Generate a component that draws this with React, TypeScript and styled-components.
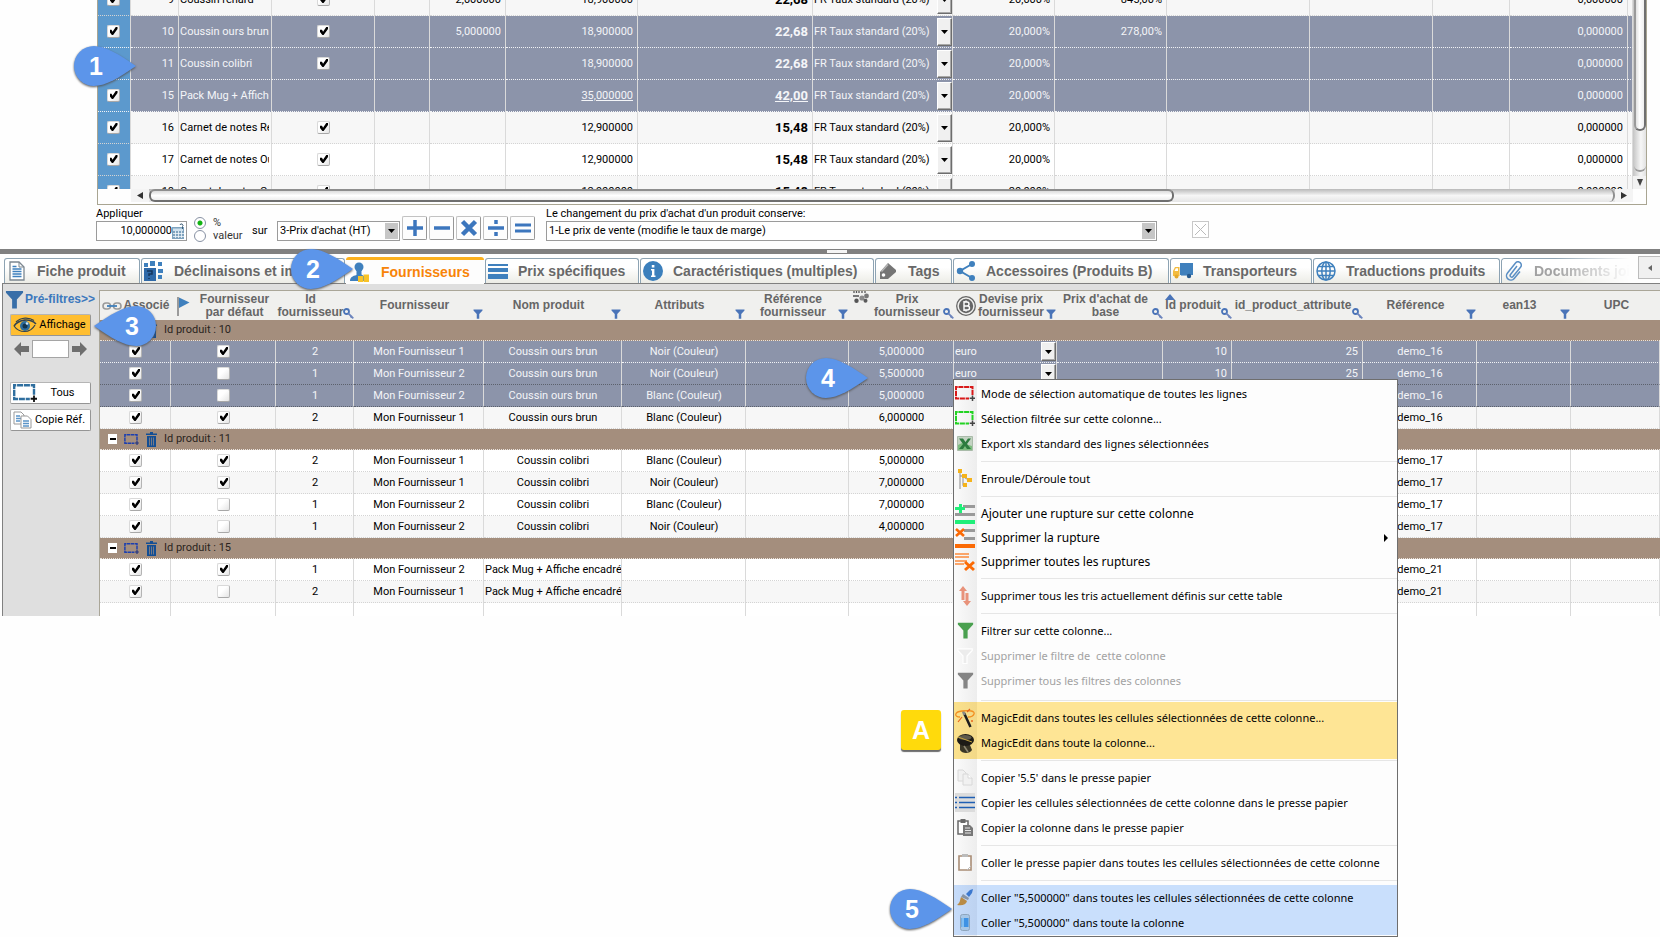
import React from 'react';
import styled, { createGlobalStyle, css } from 'styled-components';

const ui = '"Roboto", "Liberation Sans", sans-serif';
const heading = '"Liberation Sans", Arial, sans-serif';
const menuFont = '"Noto Sans", "Open Sans", sans-serif';
const blue = '#3f80bd';

const Global = createGlobalStyle`
  * { box-sizing: border-box; }
  body { margin: 0; background: #fefefe; font: 11px/14px ${ui}; color: #000; }
  button, input, select { font: inherit; color: inherit; margin: 0; padding: 0; border-radius: 0; }
  svg { display: block; flex: none; }
`;

const Page = styled.main`
  position: relative;
  overflow-x: clip;
  min-height: 100vh;
`;

/* ---------- product grid ---------- */

const ProductPanel = styled.section`
  margin: 0 13px 0 97px;
  border: solid #a9a592;
  border-width: 0 1px 1px;
`;
const ProductArea = styled.div`
  display: flex;
  height: 189px;
`;
const Viewport = styled.div`
  flex: 1;
  min-width: 0;
  overflow: hidden;
`;
const Table = styled.table<{ $scrolled?: boolean }>`
  width: 100%;
  table-layout: fixed;
  border-spacing: 0;
  margin-top: ${p => (p.$scrolled ? '-16px' : '0')};
`;
type Tone = 'selected' | 'odd' | 'even';
const tones = { selected: '#8c94aa', odd: '#f7f7f7', even: '#ffffff' };
const Row = styled.tr<{ $tone: Tone; $h: number; $focus?: boolean }>`
  background: ${p => tones[p.$tone]};
  color: ${p => (p.$tone === 'selected' ? '#f4f5f8' : '#000')};
  > td {
    height: ${p => p.$h}px;
    border-bottom: 1px dotted ${p => (p.$focus ? '#5c616c' : p.$tone === 'selected' ? '#f2f3f6' : '#d4d4d4')};
  }
`;
const pads: Record<string, string> = { left: '0 2px 0 1px', center: '0 0 0 1px', right: '0 4px 0 1px' };
const Cell = styled.td<{ $align?: string; $strong?: boolean; $under?: boolean; $marker?: boolean }>`
  padding: ${p => pads[p.$align || 'right']};
  border-right: 1px solid #dadada;
  text-align: ${p => p.$align || 'right'};
  ${p => p.$strong && css`font-size: 13px; font-weight: 700;`}
  ${p => p.$under && css`text-decoration: underline;`}
  ${p => p.$marker && css`background: #5c99cd; padding-right: 3px;`}
`;
const Clip = styled.span`
  display: block;
  overflow: hidden;
  white-space: nowrap;
`;
const Check = styled.input.attrs({ type: 'checkbox' })`
  appearance: none;
  display: block;
  margin: 0 auto;
  width: 13px;
  height: 13px;
  border: 1px solid #d9d9d9;
  border-right-color: #b4b4b4;
  border-bottom-color: #a8a8a8;
  border-radius: 2px;
  background: linear-gradient(135deg, #fff 40%, #e4e4e4);
  &:checked::after {
    content: '';
    display: block;
    width: 8px;
    height: 8px;
    margin: 1px 2px;
    background: #000;
    clip-path: polygon(0 35%, 25% 35%, 38% 58%, 78% 0, 100% 0, 100% 25%, 45% 100%, 30% 100%, 0 62%);
  }
`;
const Combo = styled.label<{ $h: number }>`
  display: flex;
  align-items: center;
  height: ${p => p.$h}px;
  margin-right: -2px;
`;
const PlainSelect = styled.select`
  appearance: none;
  flex: 1;
  min-width: 0;
  border: 0;
  background: transparent;
  outline: 0;
  option { color: #000; }
`;
const ComboArrow = styled.span`
  display: grid;
  place-items: center;
  width: 15px;
  height: 100%;
  background: #f0f0f0;
  border: 1px solid #fff;
  border-right: 1px solid #6d6d6d;
  border-bottom: 1px solid #6d6d6d;
  box-shadow: inset -1px -1px #a8a8a8;
`;

const Down = () => (
  <svg width={7} height={4} viewBox="0 0 7 4"><path d="M0 0h7L3.500 4z" /></svg>
);

const VBar = styled.div`
  width: 13px;
  display: flex;
  flex-direction: column;
  align-items: center;
  background: linear-gradient(90deg, #c4c4c4, #f6f6f6 60%, #e2e2e2);
`;
const VThumb = styled.div`
  width: 12px;
  height: 131px;
  border: 2px solid #6f6f6f;
  border-left-color: #9a9a9a;
  border-top: 0;
  border-radius: 0 0 6px 6px;
  background: linear-gradient(90deg, #e2e2e2, #fff 45%, #eee);
`;
const VEnd = styled.div`
  flex: 1;
  width: 12px;
  margin-bottom: 4px;
  border-bottom: 2px solid #9c9c9c;
  border-radius: 0 0 6px 6px;
`;
const VArrow = styled.button`
  width: 13px;
  height: 13px;
  display: grid;
  place-items: center;
  border: 0;
  background: #f2f2f2;
`;
const HBarRow = styled.div`
  display: flex;
  height: 15px;
  padding: 0 13px 2px 33px;
`;
const HBar = styled.div`
  flex: 1;
  display: flex;
  align-items: stretch;
  background: linear-gradient(#b9b9b9, #f6f6f6 50%, #e6e6e6);
`;
const HArrow = styled.button`
  width: 18px;
  display: grid;
  place-items: center;
  border: 0;
  background: #f4f4f4;
`;
const HTrack = styled.div`
  flex: 1;
  border-right: 2px solid #8f8f8f;
  border-radius: 6px;
`;
const HThumb = styled.div`
  width: 70%;
  height: 13px;
  border: 2px solid #6f6f6f;
  border-top-color: #8e8e8e;
  border-radius: 6px;
  background: linear-gradient(#dcdcdc, #fff 50%, #eee);
`;

/* ---------- price tool row ---------- */

const Tools = styled.section`
  display: flex;
  align-items: flex-start;
  height: 44px;
  padding: 2px 0 0 96px;
`;
const Field = styled.label<{ $w: number; $mr: number }>`
  display: flex;
  flex-direction: column;
  width: ${p => p.$w}px;
  margin-right: ${p => p.$mr}px;
`;
const FieldBox = styled.span`
  display: flex;
  align-items: center;
  height: 20px;
  padding: 1px;
  border: 1px solid #9b9b9b;
  background: #fff;
`;
const NumberInput = styled.input`
  flex: 1;
  min-width: 0;
  border: 0;
  outline: 0;
  text-align: right;
`;
const ListBox = styled(FieldBox)`
  padding-left: 2px;
`;
const ListArrow = styled.span`
  display: grid;
  place-items: center;
  width: 13px;
  height: 16px;
  background: #c6c6c6;
`;
const RadioGroup = styled.div`
  display: flex;
  flex-direction: column;
  padding-top: 9px;
  width: 58px;
`;
const RadioLabel = styled.label`
  display: flex;
  align-items: center;
  gap: 7px;
  height: 13px;
  color: #333;
`;
const Radio = styled.input.attrs({ type: 'radio' })`
  appearance: none;
  width: 12px;
  height: 12px;
  border: 1px solid #8791a3;
  border-radius: 50%;
  background: #fff;
  &:checked { background: radial-gradient(circle, #12b312 2px, #fff 3px); }
`;
const Inline = styled.span`
  padding-top: 17px;
  width: 25px;
`;
const SelectHolder = styled.div`
  padding-top: 14px;
  width: 123px;
  margin-right: 2px;
`;
const OpButton = styled.button`
  display: grid;
  place-items: center;
  width: 25px;
  height: 24px;
  margin: 9px 2px 0 0;
  background: #fdfdfd;
  border: 1px solid #c2c2c2;
  border-right-color: #979797;
  border-bottom-color: #979797;
  border-radius: 2px;
`;
const WideField = styled(Field)`margin-left: 9px;`;
const CloseBox = styled.button`
  width: 17px;
  height: 17px;
  margin-top: 14px;
  display: grid;
  place-items: center;
  background: #fff;
  border: 1px solid #c8c8c8;
`;
const Splitter = styled.div`
  height: 5px;
  display: flex;
  justify-content: center;
  padding: 1px 0 1px 14px;
  background: #808080;
`;
const Grip = styled.span`
  width: 20px;
  background: #f4f4f4;
`;

/* ---------- tabs ---------- */

const TabStrip = styled.nav`
  display: flex;
  align-items: flex-end;
  gap: 1px;
  height: 29px;
  padding: 2px 0 0 4px;
`;
const Tab = styled.button<{ $w?: number; $active?: boolean; $fade?: boolean }>`
  flex: ${p => (p.$w ? `0 0 ${p.$w}px` : '1 1 0')};
  min-width: 0;
  overflow: hidden;
  display: flex;
  align-items: center;
  gap: 10px;
  height: 25px;
  padding: 0 0 0 2px;
  border: 1px solid #8da3b3;
  border-bottom: 0;
  border-radius: 3px 3px 0 0;
  background: linear-gradient(#fff 35%, #ecece6);
  color: #686868;
  font: 700 14px/18px ${heading};
  white-space: nowrap;
  ${p => p.$active && css`
    gap: 12px;
    height: 27px;
    padding-left: 3px;
    margin-bottom: -1px;
    border: 0;
    border-top: 3px solid #fbb01e;
    background: #fdfdfd;
    color: #f88408;
    position: relative;
  `}
  ${p => p.$fade && css`
    border-right: 0;
    color: #a2a2a2;
    mask-image: linear-gradient(90deg, #000 40%, transparent 95%);
  `}
`;
const IconSlot = styled.span<{ $top?: boolean }>`
  display: grid;
  place-items: ${p => (p.$top ? 'start' : 'center')} center;
  width: 20px;
  height: ${p => (p.$top ? '100%' : '20px')};
  flex: none;
`;
const TabScroll = styled.button`
  flex: none;
  display: grid;
  place-items: center;
  width: 22px;
  height: 23px;
  align-self: flex-start;
  border: 1px solid #bcbcbc;
  border-right: 0;
  background: #f0f0f0;
`;

/* ---------- supplier panel ---------- */

const SupplierPanel = styled.section`
  display: flex;
  margin-left: 2px;
  border: solid #808080;
  border-width: 1px 0 0 1px;
  background: #dfdfdf;
`;
const SideBar = styled.aside`
  flex: none;
  width: 96px;
  padding: 5px 8px 0 7px;
  display: flex;
  flex-direction: column;
`;
const PreFilter = styled.a`
  display: flex;
  align-items: center;
  gap: 1px;
  height: 20px;
  margin: 0 -8px 5px -5px;
  color: #3c78bd;
  font: 700 12px/14px ${heading};
  text-decoration: none;
`;
const SideButton = styled.button<{ $hot?: boolean }>`
  display: flex;
  align-items: center;
  height: 22px;
  padding: 0 2px;
  margin-bottom: 5px;
  border: 1px solid #b5b5b5;
  border-right-color: #959595;
  border-bottom-color: #959595;
  border-radius: 2px;
  background: ${p => (p.$hot ? '#ffbe31' : '#fff')};
  > span { flex: 1; text-align: center; white-space: nowrap; }
`;
const Stepper = styled.div`
  display: flex;
  align-items: center;
  justify-content: center;
  gap: 3px;
  height: 18px;
  margin: -1px 0 24px;
`;
const StepInput = styled.input`
  width: 37px;
  height: 18px;
  border: 1px solid #a5a5a5;
  background: #fff;
`;
const SupplierGrid = styled.div`
  flex: 1;
  min-width: 0;
  overflow: hidden;
  margin-top: 6px;
  border: solid #aaa698;
  border-width: 1px 0 0 1px;
  background: #fff;
`;
const HeadCell = styled.th`
  height: 29px;
  padding: 0;
  background: #f0f0ee;
  color: #666;
  font: 700 12px/13px ${heading};
`;
const HeadInner = styled.div`
  position: relative;
  display: flex;
  align-items: center;
  height: 29px;
  padding: 0 0 0 2px;
`;
const HeadLabel = styled.span`
  flex: 1;
  min-width: 0;
  display: flex;
  justify-content: center;
  text-align: center;
  white-space: pre;
`;
const HeadAction = styled.span`
  align-self: flex-end;
  width: 11px;
  padding-bottom: 1px;
`;
const SortMark = styled.span`
  position: absolute;
  top: 3px;
  left: 2px;
`;
const GroupCell = styled.td`
  height: 21px;
  padding: 0 8px;
  background: #a48e7d;
  border-bottom: 1px dotted #e9e2dc;
  color: #2a2420;
`;
const GroupInner = styled.div`
  display: flex;
  align-items: center;
  gap: 7px;
`;
const Toggle = styled.button`
  display: grid;
  place-items: center;
  width: 9px;
  height: 10px;
  border: 0;
  background: #fff;
`;
const Filler = styled.td`
  height: 13px;
  padding: 0;
  border-right: 1px solid #dadada;
`;

/* ---------- context menu ---------- */

const Menu = styled.div`
  position: absolute;
  left: 953px;
  top: 379px;
  width: 445px;
  padding: 1px 0;
  border: 1px solid #6e6e6e;
  background: linear-gradient(90deg, #fbfbfb, #ededed) 0 0 / 23px 100% no-repeat #fdfdfd;
  font: 11px/16px ${menuFont};
`;
const MenuGroup = styled.div<{ $hl?: 'yellow' | 'blue' }>`
  ${p => p.$hl === 'yellow' && css`
    padding: 3px 0 4px;
    background: linear-gradient(90deg, #fbe18b, #f2d888) 0 0 / 23px 100% no-repeat #fee595;
  `}
  ${p => p.$hl === 'blue' && css`
    background: linear-gradient(90deg, #c6dcfa, #bdd2f0) 0 0 / 23px 100% no-repeat #c9dffc;
  `}
`;
const Item = styled.button<{ $loose?: boolean }>`
  display: flex;
  align-items: center;
  width: 100%;
  height: ${p => (p.$loose ? 24 : 25)}px;
  padding: 0 9px 0 1px;
  gap: 6px;
  border: 0;
  background: transparent;
  text-align: left;
  font-size: ${p => (p.$loose ? 12 : 11)}px;
  white-space: pre;
  &:disabled { color: #a2a2a2; }
  > span:nth-child(2) { flex: 1; }
`;
const Rule = styled.hr<{ $h?: number; $top?: number }>`
  height: 1px;
  margin: ${p => p.$top ?? 5}px 0 ${p => (p.$h ?? 10) - 1 - (p.$top ?? 5)}px 27px;
  border: 0;
  background: #e6e6e6;
`;

/* ---------- annotations ---------- */

const Callout = styled.span<{ $x: number; $y: number; $flip?: boolean }>`
  position: absolute;
  left: ${p => p.$x}px;
  top: ${p => p.$y}px;
  width: 62px;
  height: 40px;
  padding: ${p => (p.$flip ? '0 0 0 14px' : '0 18px 0 0')};
  color: #fff;
  font: 700 25px/41px ${heading};
  text-align: center;
  > svg { position: absolute; inset: 0; overflow: visible; filter: drop-shadow(0 1px 1px #555); }
  > b { position: relative; }
`;
const Badge = styled.span`
  position: absolute;
  left: 901px;
  top: 710px;
  width: 40px;
  height: 40px;
  border-radius: 3px;
  background: #ffda0c;
  box-shadow: 0 2px 1px #6b6b6b;
  color: #fff;
  font: 700 25px/41px ${heading};
  text-align: center;
`;

/* ---------- icons ---------- */

const Funnel = ({ s = 10, c = '#4a74b8', stroke = 'none' }: { s?: number; c?: string; stroke?: string }) => (
  <svg width={s} height={s} viewBox="0 0 20 20"><path d="M1 1h18v2l-6.500 7v9.500h-5V10L1 3z" fill={c} stroke={stroke} strokeWidth={1.500} /></svg>
);
const KeyIcon = () => (
  <svg width={11} height={11} viewBox="0 0 11 11"><circle cx={3.500} cy={3.500} r={2.500} fill="none" stroke="#4a74b8" strokeWidth={1.800} /><path d="M5.300 5.300l5 5M7.500 9.500l1.700-1.700" stroke="#6d85bd" strokeWidth={1.800} /></svg>
);
const DocIcon = () => (
  <svg width={16} height={20} viewBox="0 0 16 20"><path d="M1 1h9l5 5v13H1z" fill="#fff" stroke="#7c8790" strokeWidth={1.300} /><path d="M10 1v5h5" fill="none" stroke="#7c8790" /><path d="M3.500 8h9M3.500 10.500h9M3.500 13h9M3.500 15.500h9M3.500 5.500h4" stroke={blue} strokeWidth={1.400} /></svg>
);
const BoxesIcon = () => (
  <svg width={20} height={20} viewBox="0 0 20 20"><path d="M0 7h12v13H0z" fill="#2f69a8" /><path d="M0 2h4v4H0zM6 0h5v5H6zM14 1h4v4h-4zM14 8h5v4h-5zM14 14h4v4h-4z" fill={blue} /><path d="M3 10h5v3H5v2M5 17v1" fill="none" stroke="#16365c" strokeWidth={1.500} /></svg>
);
const SupplierIcon = () => (
  <svg width={20} height={20} viewBox="0 0 20 20"><circle cx={10} cy={5} r={4.500} fill={blue} /><path d="M7.500 8h5v4.500l4 2.500H19v4H1c0-3.500 2.500-5 6.500-6z" fill={blue} /><path d="M9 14h5v6H9zM14.500 12.500H20V20h-5.500z" fill="#f8c327" /></svg>
);
const LinesIcon = () => (
  <svg width={20} height={15} viewBox="0 0 20 15"><path d="M0 0h20v2H0zM0 4h20v4H0zM0 10h20v5H0z" fill={blue} /></svg>
);
const InfoIcon = () => (
  <svg width={20} height={20} viewBox="0 0 20 20"><circle cx={10} cy={10} r={10} fill="#3b7fbc" /><path d="M8.800 4h2.600v2.600H8.800zM8 8h3.400v6.500H12.500V16H8v-1.500h1V9.500H8z" fill="#fff" /></svg>
);
const TagIcon = () => (
  <svg width={18} height={18} viewBox="0 0 18 18"><path d="M1 10L9 1l8 7v2L9 17H1z" fill="#757575" /><path d="M2.500 9.500L9 2.500" stroke="#b5b5b5" strokeWidth={1.500} /><circle cx={4.500} cy={13} r={1.800} fill="#fff" /></svg>
);
const ShareIcon = () => (
  <svg width={20} height={20} viewBox="0 0 20 20"><path d="M16 3L4 10l12 7" fill="none" stroke={blue} strokeWidth={2} /><circle cx={16} cy={3} r={3} fill={blue} /><circle cx={4} cy={10} r={3.200} fill={blue} /><circle cx={16} cy={17} r={3} fill={blue} /></svg>
);
const TruckIcon = () => (
  <svg width={20} height={16} viewBox="0 0 20 16"><path d="M7 0h13v12H7z" fill={blue} /><path d="M0 13V8l2-4h4.500v9z" fill="#f3bb3f" /><path d="M1.500 8l1.300-2.700H5V8z" fill="#fff" /><circle cx={3.500} cy={13.500} r={2} fill="#e3a72a" /><circle cx={16} cy={13} r={2.200} fill="#25598d" /><path d="M8 12.500h6" stroke="#8db2d3" /></svg>
);
const GlobeIcon = () => (
  <svg width={20} height={20} viewBox="0 0 20 20" fill="none" stroke={blue} strokeWidth={1.500}><circle cx={10} cy={10} r={9} /><ellipse cx={10} cy={10} rx={4.200} ry={9} /><path d="M10 1v18M1 10h18M2.500 5.500h15M2.500 14.500h15" /></svg>
);
const ClipIcon = () => (
  <svg width={18} height={20} viewBox="0 0 18 20" fill="none" stroke="#5b8fc4" strokeWidth={1.500}><path d="M12 5L5.500 13.500a1.600 1.600 0 0 0 2.500 2L15.500 6.300A3.200 3.200 0 0 0 10.500 2L2.500 12a4.300 4.300 0 0 0 6.700 5.500L15 10.500" /></svg>
);
const LinkIcon = () => (
  <svg width={20} height={8} viewBox="0 0 20 8" fill="none"><rect x={1} y={1} width={7.500} height={6} rx={3} stroke="#9a9a9a" strokeWidth={1.600} /><rect x={11.500} y={1} width={7.500} height={6} rx={3} stroke="#9a9a9a" strokeWidth={1.600} /><path d="M5 4h10" stroke={blue} strokeWidth={1.800} /></svg>
);
const FlagIcon = () => (
  <svg width={14} height={20} viewBox="0 0 14 20"><path d="M2 1v19" stroke="#9a9a9a" strokeWidth={2} /><path d="M3 1.500l10.500 5L3 12z" fill={blue} /></svg>
);
const CoinsIcon = () => (
  <svg width={16} height={12} viewBox="0 0 16 12"><path d="M1 0v2M3.500 0v2M6 0v2M9 0v2M12 0v2" stroke="#555" strokeWidth={1.300} /><path d="M0 4h6v2H0z" fill="#777" /><circle cx={3.500} cy={9.800} r={2.200} fill="#555" /><circle cx={9} cy={7} r={2.600} fill="#8a8a8a" /><circle cx={13.500} cy={5} r={2.400} fill="#777" /><circle cx={12.500} cy={9.800} r={2} fill="#5a5a5a" /></svg>
);
const BitcoinIcon = () => (
  <svg width={20} height={20} viewBox="0 0 20 20" fill="none" stroke="#666"><circle cx={10} cy={10} r={9.300} strokeWidth={1.300} /><circle cx={10} cy={10} r={7.200} fill="#666" stroke="none" /><path d="M8 6h3a1.900 1.900 0 0 1 0 4H8zM8 10h3.500a2 2 0 0 1 0 4H8zM8 5v10M10 4.500V6M10 14v1.500" stroke="#fff" strokeWidth={1.400} /></svg>
);
const EyeIcon = () => (
  <svg width={24} height={16} viewBox="0 0 24 16" fill="none"><path d="M1 9C6 2 17 1 23 7" stroke="#33434f" strokeWidth={1.600} /><path d="M3 5C8 0 16 0 21 3.500" stroke="#33434f" strokeWidth={1.200} /><path d="M1 9c5 7 16 8 21-1" stroke="#33434f" strokeWidth={1.200} /><circle cx={12} cy={9} r={5} fill="#2c6c9e" /><circle cx={12} cy={9} r={2.500} fill="#14344d" /><circle cx={14} cy={6.500} r={1.300} fill="#cfe6f5" /></svg>
);
const Arrow = ({ left }: { left?: boolean }) => (
  <svg width={15} height={14} viewBox="0 0 15 14"><path d={left ? 'M0 7L7 0v4h8v6H7v4z' : 'M15 7L8 0v4H0v6h8v4z'} fill="#6e6e6e" /></svg>
);
const Marquee = ({ c, w = 20, plus = '#333' }: { c: string; w?: number; plus?: string }) => (
  <svg width={w} height={Math.round(w * 0.75)} viewBox="0 0 20 15" fill="none"><path d="M17.500 9V1H1v11.500h13" stroke={c} strokeWidth={2} strokeDasharray="5 .7" /><path d="M17.500 9.500V15M14.700 12.300H20" stroke={plus} strokeWidth={1.500} /></svg>
);
const CopyIcon = ({ c = '#5b94c8', o = '#999' }: { c?: string; o?: string }) => (
  <svg width={19} height={18} viewBox="0 0 19 18" fill="#fff" stroke={o}><path d="M1 1h7l3 3v9H1z" /><path d="M3 5h4M3 7.500h5M3 10h4" stroke={c} strokeWidth={1.300} /><path d="M8 5h6.500L18 8.500V17H8z" /><path d="M10 10h6M10 12.500h6M10 15h6" stroke={c} strokeWidth={1.300} /></svg>
);
const FadedCopyIcon = () => (
  <svg width={16} height={17} viewBox="0 0 16 17" fill="#f1f1f1" stroke="#d8d8d8"><path d="M1 1h5l3 3v8H1z" /><path d="M6 5h5l4 4v7H6z" /><path d="M11 5v4h4" fill="#fff" /></svg>
);
const TrashIcon = () => (
  <svg width={11} height={15} viewBox="0 0 11 15"><path d="M4 0h3v1.500h4V3H0V1.500h4zM1 4h9v11H1z" fill="#134e94" /><path d="M3.500 5.500v8M5.500 5.500v8M7.500 5.500v8" stroke="#a48e7d" strokeWidth={.7} /></svg>
);
const CalcIcon = () => (
  <svg width={13} height={16} viewBox="0 0 13 16"><path d="M0 4h12v12H0z" fill="#7fa3be" /><path d="M1 5.500h10v2.500H1z" fill="#cfe1ee" /><path d="M1 10.500h11M1 13.500h11M3.500 8v7M6.500 8v7M9.500 8v7" stroke="#f0f6fa" strokeWidth={.8} /><path d="M8 2a1.500 1.500 0 1 1 2.500 1.500V6" fill="none" stroke="#3b5d78" /></svg>
);
const XlsIcon = () => (
  <svg width={16} height={15} viewBox="0 0 16 15"><path d="M.5.500h15v14H.5z" fill="#c4d3c3" stroke="#a9bba9" /><path d="M1 9l4-2 10 3v4H1z" fill="#7dbd7f" /><path d="M2 2.500h4L8.500 6 11 2.500h3L10 8l4 5h-4L8 10l-2 3H2l4-5z" fill="#2c7c3f" /></svg>
);
const TreeIcon = () => (
  <svg width={16} height={20} viewBox="0 0 16 20"><path d="M3 2v18M3 7h5M6 9v7h3M8 9l4 2" fill="none" stroke="#a5a5a5" strokeWidth={1.300} /><path d="M1 0h4v4H1zM5 5h5v4H5zM10 9h5v4h-5zM6 14h4v4H6z" fill="#f5b31b" /></svg>
);
const BreakAdd = () => (
  <svg width={20} height={20} viewBox="0 0 20 20"><path d="M8 1h12v3H8zM0 9h20v3H0z" fill="#999" /><path d="M0 16h20v4H0z" fill="#1fef79" /><path d="M4 0h3v3h3v3H7v3H4V6H0V3h4z" fill="#1fef79" /></svg>
);
const BreakDel = () => (
  <svg width={20} height={20} viewBox="0 0 20 20"><path d="M9 1h11v3H9zM9 9h11v3H9z" fill="#999" /><path d="M0 16h20v4H0z" fill="#fb6a05" /><path d="M1 1l8 7M9 1L1 8" stroke="#fb6a05" strokeWidth={2.600} /></svg>
);
const BreakDelAll = () => (
  <svg width={20} height={20} viewBox="0 0 20 20"><path d="M0 2h14M0 5h14M0 9h12M0 12h9" stroke="#fb8a3c" strokeWidth={1.300} /><path d="M10 10l9 8M19 10l-9 8" stroke="#fb6a05" strokeWidth={3} /></svg>
);
const SortIcon = () => (
  <svg width={12} height={20} viewBox="0 0 12 20"><path d="M4 0l4 5H5.500v9h-3V5H0zM8 20l-4-5h2.500V7h3v8H12z" fill="#e8927a" /></svg>
);
const WandIcon = () => (
  <svg width={20} height={20} viewBox="0 0 20 20" fill="none"><path d="M9 5l6.500 14" stroke="#1c1c1c" strokeWidth={2.500} /><path d="M8 3l1.500 4" stroke="#888" strokeWidth={2.500} /><path d="M5 9C-1 9-1 4 7 3s13 0 12 3-6 3-6 3" stroke="#f39021" strokeWidth={1.300} /><path d="M3 14l4-5M12 4l3-3" stroke="#e8641c" strokeWidth={1.200} /><circle cx={17} cy={13} r={1} fill="#e8641c" /></svg>
);
const HatIcon = () => (
  <svg width={19} height={20} viewBox="0 0 19 20"><path d="M4 11l10 1 2 5c-2 4-10 4-12 0z" fill="#3a3626" /><ellipse cx={9.500} cy={7} rx={8.500} ry={6} fill="#1d1b16" /><ellipse cx={9} cy={4.500} rx={6.500} ry={2.500} fill="#5e5a4c" /><path d="M2 4l14 5" stroke="#c3a23f" /><path d="M8 13l4 6" stroke="#8f8871" strokeWidth={1.500} /></svg>
);
const ListIcon = () => (
  <svg width={20} height={19} viewBox="0 0 20 19"><path d="M0 0h20v19H0z" fill="#dcdcdc" /><path d="M0 4.500h2M0 9.500h2M0 14.500h2M4 4.500h16M4 9.500h16M4 14.500h16" stroke="#1f5fb4" strokeWidth={1.500} /></svg>
);
const ClipboardIcon = ({ paste }: { paste?: boolean }) => paste ? (
  <svg width={14} height={17} viewBox="0 0 14 17"><path d="M1 2h12v14H1z" fill="#fff" stroke="#a98d76" strokeWidth={1.600} /><path d="M4 0h6v3H4z" fill="#bbb" /><path d="M9 16l4-4" stroke="#bbb" /></svg>
) : (
  <svg width={16} height={17} viewBox="0 0 16 17"><path d="M1 2h10v13H1z" fill="#fff" stroke="#6a6a6a" strokeWidth={1.500} /><path d="M3.500 0h5v4h-5z" fill="#6a6a6a" /><path d="M6 6h7l3 3v8H6z" fill="#777" /><path d="M8 9h5M8 11.500h6M8 14h6" stroke="#e8e8e8" /></svg>
);
const BrushIcon = () => (
  <svg width={16} height={17} viewBox="0 0 16 17"><path d="M9 5l4-4 3-1-1 4-3 4z" fill="#3b78cf" /><path d="M6 5l6 4-1 2-7-3z" fill="#8794a5" /><path d="M4 8l6 4c-1 4-5 5-10 4 3-2 3-5 4-8z" fill="#b98b45" /></svg>
);
const BucketIcon = () => (
  <svg width={10} height={17} viewBox="0 0 10 17"><rect x={.5} y={.5} width={9} height={16} rx={2} fill="#a8c7e6" stroke="#8fa6bd" /><path d="M1.500 4h7v9h-7z" fill="#3f92e4" /><path d="M3 4v9" stroke="#9bcff9" strokeWidth={1.500} /></svg>
);
const Op = ({ d, w = 3.500 }: { d: string; w?: number }) => (
  <svg width={18} height={18} viewBox="0 0 18 18"><path d={d} fill="none" stroke="#3c76bd" strokeWidth={w} /></svg>
);

/* ---------- data ---------- */

const productCols = [33, 48, 93, 103, 55, 76, 132, 175, 140, 102, 112, 143, 123, 77, 118];
type Product = { id: string; name: string; active?: boolean; buy?: string; cost: string; price: string; margin?: string; tone: Tone; pack?: boolean };
const products: Product[] = [
  { id: '9', name: 'Coussin renard', active: true, buy: '2,000000', cost: '18,900000', price: '22,68', margin: '845,00%', tone: 'odd' },
  { id: '10', name: 'Coussin ours brun', active: true, buy: '5,000000', cost: '18,900000', price: '22,68', margin: '278,00%', tone: 'selected' },
  { id: '11', name: 'Coussin colibri', active: true, cost: '18,900000', price: '22,68', tone: 'selected' },
  { id: '15', name: 'Pack Mug + Affiche', cost: '35,000000', price: '42,00', tone: 'selected', pack: true },
  { id: '16', name: 'Carnet de notes Renard', active: true, cost: '12,900000', price: '15,48', tone: 'odd' },
  { id: '17', name: 'Carnet de notes Ours', active: true, cost: '12,900000', price: '15,48', tone: 'even' },
  { id: '18', name: 'Carnet de notes Colibri', active: true, cost: '12,900000', price: '15,48', tone: 'odd' },
];

const supplierCols = [71, 105, 78, 130, 138, 124, 103, 105, 103, 106, 69, 131, 114, 94];
type Head = { label: string; lead?: React.ReactNode; leadTop?: boolean; action?: 'filter' | 'key'; sorted?: boolean };
const heads: Head[] = [
  { label: 'Associé', lead: <LinkIcon /> },
  { label: 'Fournisseur\npar défaut', lead: <FlagIcon /> },
  { label: 'Id\nfournisseur', action: 'key' },
  { label: 'Fournisseur', action: 'filter' },
  { label: 'Nom produit', action: 'filter' },
  { label: 'Attributs', action: 'filter' },
  { label: 'Référence\nfournisseur', action: 'filter' },
  { label: 'Prix\nfournisseur', lead: <CoinsIcon />, leadTop: true, action: 'key' },
  { label: 'Devise prix\nfournisseur', lead: <BitcoinIcon />, action: 'filter' },
  { label: "Prix d'achat de\nbase", action: 'key' },
  { label: 'Id produit', action: 'key', sorted: true },
  { label: 'id_product_attribute', action: 'key' },
  { label: 'Référence', action: 'filter' },
  { label: 'ean13', action: 'filter' },
  { label: 'UPC' },
];
type Line = { def: boolean; sid: string; attr: string; price: string; tone: Tone; ids?: [string, string]; focus?: boolean };
const groups: { id: string; product: string; reference: string; lines: Line[] }[] = [
  { id: '10', product: 'Coussin ours brun', reference: 'demo_16', lines: [
    { def: true, sid: '2', attr: 'Noir (Couleur)', price: '5,000000', tone: 'selected', ids: ['10', '25'] },
    { def: false, sid: '1', attr: 'Noir (Couleur)', price: '5,500000', tone: 'selected', ids: ['10', '25'], focus: true },
    { def: false, sid: '1', attr: 'Blanc (Couleur)', price: '5,000000', tone: 'selected', focus: true },
    { def: true, sid: '2', attr: 'Blanc (Couleur)', price: '6,000000', tone: 'odd' },
  ] },
  { id: '11', product: 'Coussin colibri', reference: 'demo_17', lines: [
    { def: true, sid: '2', attr: 'Blanc (Couleur)', price: '5,000000', tone: 'even' },
    { def: true, sid: '2', attr: 'Noir (Couleur)', price: '7,000000', tone: 'odd' },
    { def: false, sid: '1', attr: 'Blanc (Couleur)', price: '7,000000', tone: 'even' },
    { def: false, sid: '1', attr: 'Noir (Couleur)', price: '4,000000', tone: 'odd' },
  ] },
  { id: '15', product: 'Pack Mug + Affiche encadrée', reference: 'demo_21', lines: [
    { def: true, sid: '1', attr: '', price: '', tone: 'even' },
    { def: false, sid: '2', attr: '', price: '', tone: 'odd' },
  ] },
];
const supplierName = (group: string, line: Line) =>
  group === '15' ? (line.sid === '1' ? 'Mon Fournisseur 2' : 'Mon Fournisseur 1') : line.sid === '2' ? 'Mon Fournisseur 1' : 'Mon Fournisseur 2';

const tabs: { label: string; icon: React.ReactNode; w?: number; active?: boolean }[] = [
  { label: 'Fiche produit', icon: <DocIcon />, w: 136 },
  { label: 'Déclinaisons et images', icon: <BoxesIcon />, w: 204 },
  { label: 'Fournisseurs', icon: <SupplierIcon />, w: 138, active: true },
  { label: 'Prix spécifiques', icon: <LinesIcon />, w: 154 },
  { label: 'Caractéristiques (multiples)', icon: <InfoIcon />, w: 234 },
  { label: 'Tags', icon: <TagIcon />, w: 77 },
  { label: 'Accessoires (Produits B)', icon: <ShareIcon />, w: 216 },
  { label: 'Transporteurs', icon: <TruckIcon />, w: 142 },
  { label: 'Traductions produits', icon: <GlobeIcon />, w: 187 },
  { label: 'Documents joints', icon: <ClipIcon /> },
];

const MenuItem = ({ icon, children, loose, disabled, sub }: { icon: React.ReactNode; children: string; loose?: boolean; disabled?: boolean; sub?: boolean }) => (
  <Item role="menuitem" $loose={loose} disabled={disabled}>
    <IconSlot>{icon}</IconSlot>
    <span>{children}</span>
    {sub && <svg width={4} height={8} viewBox="0 0 4 8"><path d="M0 0l4 4-4 4z" /></svg>}
  </Item>
);

const Marker = ({ n, x, y, flip }: { n: string; x: number; y: number; flip?: boolean }) => (
  <Callout $x={x} $y={y} $flip={flip}>
    <svg width={62} height={40} viewBox="0 0 62 40">
      <path fill="#5c95ea" d={flip
        ? 'M0 20C16 9 30 0 42 0a20 20 0 0 1 0 40C30 40 16 31 0 20z'
        : 'M62 20C46 9 32 0 20 0a20 20 0 0 0 0 40C32 40 46 31 62 20z'} />
    </svg>
    <b>{n}</b>
  </Callout>
);

function ProductGrid() {
  return (
    <ProductPanel>
      <ProductArea>
        <Viewport>
          <Table $scrolled>
            <colgroup>{productCols.map((w, i) => <col key={i} width={w} />)}<col /></colgroup>
            <tbody>
              {products.map(p => (
                <Row key={p.id} $tone={p.tone} $h={32}>
                  <Cell $marker><Check defaultChecked aria-label={`Sélection ${p.id}`} /></Cell>
                  <Cell>{p.id}</Cell>
                  <Cell $align="left"><Clip>{p.name}</Clip></Cell>
                  <Cell $align="center">{p.active && <Check defaultChecked aria-label={`Actif ${p.id}`} />}</Cell>
                  <Cell />
                  <Cell>{p.buy}</Cell>
                  <Cell $under={p.pack}>{p.cost}</Cell>
                  <Cell $strong $under={p.pack}>{p.price}</Cell>
                  <Cell $align="left">
                    <Combo $h={28}>
                      <PlainSelect aria-label="Taxe"><option>FR Taux standard (20%)</option></PlainSelect>
                      <ComboArrow><Down /></ComboArrow>
                    </Combo>
                  </Cell>
                  <Cell>20,000%</Cell>
                  <Cell>{p.margin}</Cell>
                  <Cell /><Cell /><Cell />
                  <Cell>0,000000</Cell>
                  <Cell />
                </Row>
              ))}
            </tbody>
          </Table>
        </Viewport>
        <VBar><VThumb /><VEnd /><VArrow aria-label="Descendre"><svg width={6} height={7} viewBox="0 0 6 7"><path d="M0 0h6L3 7z" fill="#444" /></svg></VArrow></VBar>
      </ProductArea>
      <HBarRow>
        <HBar>
          <HArrow aria-label="Gauche"><svg width={6} height={7} viewBox="0 0 6 7"><path d="M6 0v7L0 3.500z" fill="#333" /></svg></HArrow>
          <HTrack><HThumb /></HTrack>
          <HArrow aria-label="Droite"><svg width={6} height={7} viewBox="0 0 6 7"><path d="M0 0v7l6-3.500z" fill="#333" /></svg></HArrow>
        </HBar>
      </HBarRow>
    </ProductPanel>
  );
}

function PriceTools() {
  return (
    <Tools>
      <Field $w={91} $mr={7}>
        Appliquer
        <FieldBox><NumberInput defaultValue="10,000000" /><CalcIcon /></FieldBox>
      </Field>
      <RadioGroup>
        <RadioLabel><Radio name="mode" defaultChecked />%</RadioLabel>
        <RadioLabel><Radio name="mode" />valeur</RadioLabel>
      </RadioGroup>
      <Inline>sur</Inline>
      <SelectHolder>
        <ListBox>
          <PlainSelect aria-label="sur"><option>3-Prix d'achat (HT)</option></PlainSelect>
          <ListArrow><Down /></ListArrow>
        </ListBox>
      </SelectHolder>
      <OpButton aria-label="Ajouter"><Op d="M9 1v16M1 9h16" /></OpButton>
      <OpButton aria-label="Soustraire"><Op d="M1 9h16" /></OpButton>
      <OpButton aria-label="Multiplier"><Op w={4.500} d="M2.500 2.500l13 13M15.500 2.500l-13 13" /></OpButton>
      <OpButton aria-label="Diviser"><Op d="M1 9h16M9 1v4M9 13v4" /></OpButton>
      <OpButton aria-label="Égal"><Op w={3} d="M1 6h16M1 12h16" /></OpButton>
      <WideField $w={611} $mr={35}>
        Le changement du prix d'achat d'un produit conserve:
        <ListBox>
          <PlainSelect><option>1-Le prix de vente (modifie le taux de marge)</option></PlainSelect>
          <ListArrow><Down /></ListArrow>
        </ListBox>
      </WideField>
      <CloseBox aria-label="Fermer"><svg width={11} height={11} viewBox="0 0 11 11"><path d="M0 0l11 11M11 0L0 11" stroke="#bbb" /></svg></CloseBox>
    </Tools>
  );
}

function SupplierTable() {
  return (
    <SupplierGrid>
      <Table>
        <colgroup>{supplierCols.map((w, i) => <col key={i} width={w} />)}<col /></colgroup>
        <thead>
          <tr>
            {heads.map((h, i) => (
              <HeadCell key={i}>
                <HeadInner>
                  {h.sorted && <SortMark><svg width={10} height={6} viewBox="0 0 10 6"><path d="M0 6l5-6 5 6z" fill="#4a74b8" /></svg></SortMark>}
                  {h.lead && <IconSlot $top={h.leadTop}>{h.lead}</IconSlot>}
                  <HeadLabel>{h.label}</HeadLabel>
                  {h.action && <HeadAction>{h.action === 'key' ? <KeyIcon /> : <Funnel />}</HeadAction>}
                </HeadInner>
              </HeadCell>
            ))}
          </tr>
        </thead>
        <tbody>
          {groups.map(g => (
            <React.Fragment key={g.id}>
              <tr>
                <GroupCell colSpan={15}>
                  <GroupInner>
                    <Toggle aria-label="Replier"><svg width={6} height={2}><path d="M0 0h6v2H0z" /></svg></Toggle>
                    <Marquee c="#1c3fb0" w={15} plus="#1c2f80" />
                    <TrashIcon />
                    <span>Id produit : {g.id}</span>
                  </GroupInner>
                </GroupCell>
              </tr>
              {g.lines.map((l, i) => (
                <Row key={i} $tone={l.tone} $h={22} $focus={l.focus}>
                  <Cell $align="center"><Check defaultChecked aria-label="Associé" /></Cell>
                  <Cell $align="center"><Check defaultChecked={l.def} aria-label="Fournisseur par défaut" /></Cell>
                  <Cell $align="center">{l.sid}</Cell>
                  <Cell $align="center">{supplierName(g.id, l)}</Cell>
                  <Cell $align="center"><Clip>{g.product}</Clip></Cell>
                  <Cell $align="center">{l.attr}</Cell>
                  <Cell />
                  <Cell $align="center">{l.price}</Cell>
                  <Cell $align="left">
                    {l.ids && (
                      <Combo $h={19}>
                        <PlainSelect aria-label="Devise"><option>euro</option></PlainSelect>
                        <ComboArrow><Down /></ComboArrow>
                      </Combo>
                    )}
                  </Cell>
                  <Cell />
                  <Cell>{l.ids?.[0]}</Cell>
                  <Cell>{l.ids?.[1]}</Cell>
                  <Cell $align="center">{g.reference}</Cell>
                  <Cell /><Cell />
                </Row>
              ))}
            </React.Fragment>
          ))}
          <tr>{heads.map((_, i) => <Filler key={i} />)}</tr>
        </tbody>
      </Table>
    </SupplierGrid>
  );
}

function ContextMenu() {
  return (
    <Menu role="menu">
      <MenuItem icon={<Marquee c="#d81818" plus="#444" />}>Mode de sélection automatique de toutes les lignes</MenuItem>
      <MenuItem icon={<Marquee c="#22d322" plus="#444" />}>Sélection filtrée sur cette colonne...</MenuItem>
      <MenuItem icon={<XlsIcon />}>Export xls standard des lignes sélectionnées</MenuItem>
      <Rule />
      <MenuItem icon={<TreeIcon />}>Enroule/Déroule tout</MenuItem>
      <Rule $h={11} />
      <MenuItem loose icon={<BreakAdd />}>Ajouter une rupture sur cette colonne</MenuItem>
      <MenuItem loose sub icon={<BreakDel />}>Supprimer la rupture</MenuItem>
      <MenuItem loose icon={<BreakDelAll />}>Supprimer toutes les ruptures</MenuItem>
      <Rule $h={9} $top={4} />
      <MenuItem icon={<SortIcon />}>Supprimer tous les tris actuellement définis sur cette table</MenuItem>
      <Rule />
      <MenuItem icon={<Funnel s={17} c="#4aa04f" />}>Filtrer sur cette colonne...</MenuItem>
      <MenuItem disabled icon={<Funnel s={16} c="#ececec" stroke="#fff" />}>Supprimer le filtre de  cette colonne</MenuItem>
      <MenuItem disabled icon={<Funnel s={17} c="#858585" />}>Supprimer tous les filtres des colonnes</MenuItem>
      <Rule $h={9} $top={7} />
      <MenuGroup $hl="yellow">
        <MenuItem icon={<WandIcon />}>MagicEdit dans toutes les cellules sélectionnées de cette colonne...</MenuItem>
        <MenuItem icon={<HatIcon />}>MagicEdit dans toute la colonne...</MenuItem>
      </MenuGroup>
      <Rule $h={6} $top={1} />
      <MenuItem icon={<FadedCopyIcon />}>Copier '5.5' dans le presse papier</MenuItem>
      <MenuItem icon={<ListIcon />}>Copier les cellules sélectionnées de cette colonne dans le presse papier</MenuItem>
      <MenuItem icon={<ClipboardIcon />}>Copier la colonne dans le presse papier</MenuItem>
      <Rule />
      <MenuItem icon={<ClipboardIcon paste />}>Coller le presse papier dans toutes les cellules sélectionnées de cette colonne</MenuItem>
      <Rule />
      <MenuGroup $hl="blue">
        <MenuItem icon={<BrushIcon />}>Coller "5,500000" dans toutes les cellules sélectionnées de cette colonne</MenuItem>
        <MenuItem icon={<BucketIcon />}>Coller "5,500000" dans toute la colonne</MenuItem>
      </MenuGroup>
    </Menu>
  );
}

export default function App() {
  return (
    <Page>
      <Global />
      <ProductGrid />
      <PriceTools />
      <Splitter><Grip /></Splitter>
      <TabStrip>
        {tabs.map(t => (
          <Tab key={t.label} $w={t.w} $active={t.active} $fade={!t.w}>
            <IconSlot>{t.icon}</IconSlot>{t.label}
          </Tab>
        ))}
        <TabScroll aria-label="Onglets précédents"><svg width={4} height={6} viewBox="0 0 4 6"><path d="M4 0v6L0 3z" fill="#666" /></svg></TabScroll>
      </TabStrip>
      <SupplierPanel>
        <SideBar>
          <PreFilter href="#filtres"><Funnel s={19} c="#386ea8" />Pré-filtres&gt;&gt;</PreFilter>
          <SideButton $hot><EyeIcon /><span>Affichage</span></SideButton>
          <Stepper><Arrow left /><StepInput aria-label="Position" /><Arrow /></Stepper>
          <SideButton><Marquee c="#2f6f9f" w={24} plus="#111" /><span>Tous</span></SideButton>
          <SideButton><CopyIcon /><span>Copie Réf.</span></SideButton>
        </SideBar>
        <SupplierTable />
      </SupplierPanel>
      <ContextMenu />
      <Marker n="1" x={74} y={46} />
      <Marker n="2" x={291} y={249} />
      <Marker n="3" x={94} y={306} flip />
      <Marker n="4" x={806} y={358} />
      <Marker n="5" x={890} y={889} />
      <Badge>A</Badge>
    </Page>
  );
}
